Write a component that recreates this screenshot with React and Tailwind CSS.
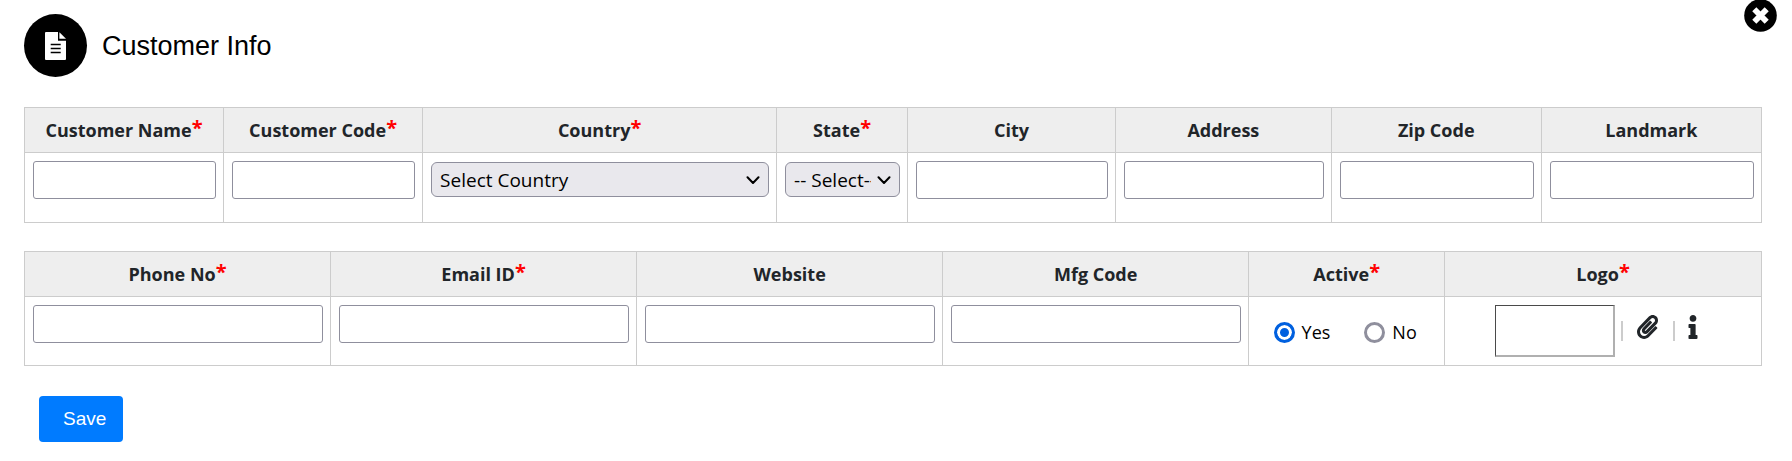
import React from "react";
import { FaInfo, FaPaperclip } from "react-icons/fa";

const inputClass =
  "block h-[38px] w-full rounded-[3px] border border-[#8f8f9d] bg-white px-2 text-lg text-black";

function CloseIcon() {
  return (
    <svg viewBox="0 0 33 33" aria-hidden="true" className="size-[33px]">
      <circle cx="16.5" cy="16.5" r="16.3" fill="#000000" />
      <path d="M10.3 10.3 L22.7 22.7 M22.7 10.3 L10.3 22.7" stroke="#ffffff" strokeWidth="5.8" />
    </svg>
  );
}

function DocumentIcon() {
  return (
    <svg viewBox="0 0 21 28" aria-hidden="true" className="h-7 w-[21px]">
      <path d="M1 0 H13 V8.7 H21 V27 Q21 28 20 28 H1 Q0 28 0 27 V1 Q0 0 1 0 Z" fill="#ffffff" />
      <path d="M14.4 0.2 L21 6.8 H14.4 Z" fill="#ffffff" />
      <path d="M5.7 12.5 H15.7 M5.7 16.5 H15.7 M5.7 20.5 H15.7" stroke="#000000" strokeWidth="1.4" />
    </svg>
  );
}

function HeaderCell({ id, required, children }) {
  return (
    <th scope="col" className="border border-[#cccccc] bg-[#eeeeee] p-2 text-center align-middle font-bold">
      <label htmlFor={id} className="block whitespace-nowrap leading-7">
        {children}
        {required && <sup className="-top-0.5 text-xl leading-none font-bold text-[#ff0000]">*</sup>}
      </label>
    </th>
  );
}

function BodyCell({ children }) {
  return <td className="border border-[#cccccc] py-2 pr-[7px] pl-2 align-top">{children}</td>;
}

function Select({ id, children }) {
  return (
    <div className="relative mt-px">
      <select
        id={id}
        className="block h-[35px] w-full appearance-none rounded-md border border-[#8f8f9d] bg-[#e9e8ed] pr-7 pl-2 text-[19px] leading-7 text-black"
      >
        {children}
      </select>
      <svg
        viewBox="0 0 14 9"
        aria-hidden="true"
        className="pointer-events-none absolute top-[14px] right-[9px] h-[9px] w-[14px] fill-none stroke-black stroke-2"
      >
        <path d="M1.5 1.2 L7 7 L12.5 1.2" strokeLinecap="round" strokeLinejoin="round" />
      </svg>
    </div>
  );
}

function Radio({ label, ...props }) {
  return (
    <label className="flex items-center gap-[7px] leading-7 text-black">
      <input
        type="radio"
        name="active"
        className="size-[21px] appearance-none rounded-full border-[3px] border-[#8f8f9d] bg-white checked:border-[#0060df] checked:bg-[#0060df] checked:shadow-[inset_0_0_0_3px_white]"
        {...props}
      />
      {label}
    </label>
  );
}

const addressFields = [
  { id: "name", label: "Customer Name", required: true, width: "w-[11.46%]" },
  { id: "code", label: "Customer Code", required: true, width: "w-[11.46%]" },
  { id: "country", label: "Country", required: true, width: "w-[20.38%]", placeholder: "Select Country" },
  { id: "state", label: "State", required: true, width: "w-[7.54%]", placeholder: "-- Select--" },
  { id: "city", label: "City", width: "w-[11.97%]" },
  { id: "address", label: "Address", width: "w-[12.42%]" },
  { id: "zip", label: "Zip Code", width: "w-[12.09%]" },
  { id: "landmark", label: "Landmark", width: "w-[12.68%]" },
];

const contactFields = [
  { id: "phone", label: "Phone No", type: "tel", required: true },
  { id: "email", label: "Email ID", type: "email", required: true },
  { id: "website", label: "Website", type: "url" },
  { id: "mfg", label: "Mfg Code", type: "text" },
];

export default function App() {
  return (
    <main className="relative bg-white pr-[30px] pl-6 font-['Open_Sans','Noto_Sans',sans-serif] text-lg text-[#212529]">
      <button type="button" aria-label="Close" className="absolute -top-px right-[15px]">
        <CloseIcon />
      </button>

      <header className="flex items-center gap-[15px] pt-[14px]">
        <span className="flex size-[63px] items-center justify-center rounded-full bg-black">
          <DocumentIcon />
        </span>
        <h1 className="font-['Liberation_Sans',sans-serif] text-[27px] text-black">Customer Info</h1>
      </header>

      <form onSubmit={(event) => event.preventDefault()}>
        <table className="mt-[30px] w-full table-fixed border-collapse">
          <colgroup>
            {addressFields.map((field) => (
              <col key={field.id} className={field.width} />
            ))}
          </colgroup>
          <thead>
            <tr>
              {addressFields.map((field) => (
                <HeaderCell key={field.id} id={field.id} required={field.required}>
                  {field.label}
                </HeaderCell>
              ))}
            </tr>
          </thead>
          <tbody>
            <tr className="h-[70px]">
              {addressFields.map((field) => (
                <BodyCell key={field.id}>
                  {field.placeholder ? (
                    <Select id={field.id}>
                      <option>{field.placeholder}</option>
                    </Select>
                  ) : (
                    <input id={field.id} type="text" className={inputClass} />
                  )}
                </BodyCell>
              ))}
            </tr>
          </tbody>
        </table>

        <table className="mt-[28px] w-full table-fixed border-collapse">
          <colgroup>
            <col className="w-[17.62%]" />
            <col className="w-[17.62%]" />
            <col className="w-[17.62%]" />
            <col className="w-[17.62%]" />
            <col className="w-[11.28%]" />
            <col />
          </colgroup>
          <thead>
            <tr>
              {contactFields.map((field) => (
                <HeaderCell key={field.id} id={field.id} required={field.required}>
                  {field.label}
                </HeaderCell>
              ))}
              <HeaderCell id="active-yes" required>Active</HeaderCell>
              <HeaderCell id="logo" required>Logo</HeaderCell>
            </tr>
          </thead>
          <tbody>
            <tr className="h-[69px]">
              {contactFields.map((field) => (
                <BodyCell key={field.id}>
                  <input id={field.id} type={field.type} className={inputClass} />
                </BodyCell>
              ))}
              <BodyCell>
                <div className="flex justify-center gap-[34px] pt-[13px] pr-1">
                  <Radio id="active-yes" label="Yes" defaultChecked />
                  <Radio id="active-no" label="No" />
                </div>
              </BodyCell>
              <BodyCell>
                <div className="flex justify-center pr-[14px]">
                  <input
                    id="logo"
                    type="text"
                    readOnly
                    className="h-[52px] w-[120px] border-t border-r-2 border-b-2 border-l border-t-[#4a4a4a] border-r-[#b0b0b0] border-b-[#b0b0b0] border-l-[#4a4a4a] bg-white"
                  />
                  <span className="mt-4 ml-[6px] h-5 w-[2px] bg-[#cccccc]" />
                  <button type="button" aria-label="Attach logo" className="mt-[10px] ml-[14px] h-6">
                    <FaPaperclip className="h-6 w-[21px]" />
                  </button>
                  <span className="mt-4 ml-[15px] h-5 w-[2px] bg-[#cccccc]" />
                  <button type="button" aria-label="Logo information" className="mt-[10px] ml-[13px] h-6">
                    <FaInfo className="h-6 w-[10px]" />
                  </button>
                </div>
              </BodyCell>
            </tr>
          </tbody>
        </table>

        <button
          type="submit"
          className="mt-[30px] ml-[15px] h-[46px] rounded bg-[#007bff] pr-[17px] pl-6 font-['Liberation_Sans',sans-serif] text-[19px] text-white"
        >
          Save
        </button>
      </form>
    </main>
  );
}
